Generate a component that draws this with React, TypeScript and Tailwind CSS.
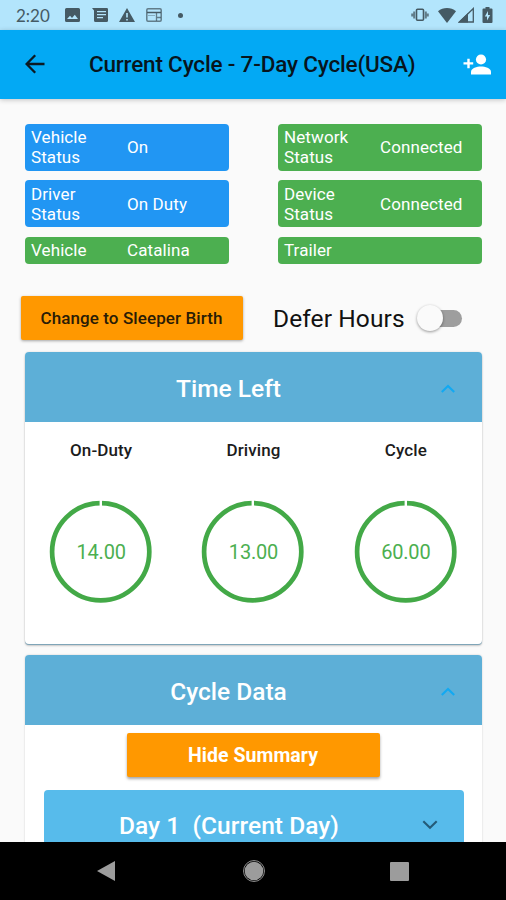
import type { ReactNode } from "react";

function Chip({ label, value, color, tall }: { label: ReactNode; value?: string; color: string; tall?: boolean }) {
  return (
    <div className={`flex items-center rounded-[4px] pl-1.5 text-[17px] leading-5 tracking-[0.1px] text-white ${color} ${tall ? "h-[47px]" : "h-[27px]"}`}>
      <div className="w-24">{label}</div>
      <div>{value}</div>
    </div>
  );
}

function Gauge({ title, value }: { title: string; value: string }) {
  return (
    <div className="flex flex-1 flex-col items-center">
      <div className="mt-[18px] text-[17px] font-medium leading-5 tracking-[0.1px] text-[#1c1c1c]">{title}</div>
      <div className="relative mt-[40px] flex h-[104px] w-[104px] items-center justify-center">
        <svg className="absolute inset-0" width="104" height="104" viewBox="0 0 104 104">
          <circle cx="51.7" cy="51.7" r="48.6" fill="none" stroke="#43a947" strokeWidth="4.7" />
          <rect x="50.600" y="0" width="2.400" height="7" fill="#fff" />
        </svg>
        <span className="relative text-[20px] tracking-[-0.2px] text-[#4caf50]">{value}</span>
      </div>
    </div>
  );
}

function Chevron({ down, color }: { down?: boolean; color: string }) {
  return (
    <svg width="16" height="10" viewBox="0 0 16 10" fill="none" stroke={color} strokeWidth="2.1">
      <path d={down ? "M1.3 1.3 8 7.8 14.7 1.3" : "M1.8 8 8 2 14.2 8"} />
    </svg>
  );
}

function StatusBar() {
  return (
    <div className="flex h-[30px] shrink-0 items-center bg-[#b3e5fc] pl-4 pr-3 text-[#455a64]">
      <span className="w-[49px] pt-px font-['Lato'] text-[17px] leading-[30px]">2:20</span>
      <svg width="15" height="14" viewBox="0 0 15 14" fill="currentColor">
        <path fillRule="evenodd" d="M1.5 0h12A1.5 1.5 0 0 1 15 1.5v11a1.5 1.5 0 0 1-1.5 1.5h-12A1.5 1.5 0 0 1 0 12.500v-11A1.500 1.500 0 0 1 1.500 0ZM2 11h11L9.800 6.700 7 10 5 7.800Z" />
      </svg>
      <svg className="ml-3" width="16" height="14" viewBox="0 0 16 14" fill="currentColor">
        <path fillRule="evenodd" d="M0 0h14.500A1.300 1.300 0 0 1 16 1.300v11A1.500 1.500 0 0 1 14.500 14H3.500A1.500 1.500 0 0 1 2 12.500V2.500ZM5 3v1.300h9V3ZM5 6v1.300h9V6ZM5 9v1.300h6V9Z" />
      </svg>
      <svg className="ml-[11px]" width="16" height="14" viewBox="0 0 16 14" fill="currentColor">
        <path fillRule="evenodd" d="M8 0 16 14H0ZM7.200 5v4.500h1.600V5ZM7.200 11v1.500h1.600V11Z" />
      </svg>
      <svg className="ml-[11px]" width="16" height="14" viewBox="0 0 16 14" fill="none" stroke="currentColor">
        <rect x="0.800" y="0.800" width="14.400" height="12.400" rx="1.200" strokeWidth="1.500" opacity="0.75" />
        <path d="M1 4.500h14" strokeWidth="1.500" />
        <path d="M10.500 5v8M10.500 9.500h4.500" strokeWidth="1.300" opacity="0.75" />
        <path d="M2 7.500h7" strokeWidth="1" opacity="0.4" />
      </svg>
      <span className="ml-4 h-[5px] w-[5px] rounded-full bg-[#455a64]" />
      <div className="flex-1" />
      <svg width="18" height="14" viewBox="0 0 18 14" fill="none" stroke="currentColor">
        <rect x="5.500" y="1.300" width="7" height="11" rx="1" strokeWidth="1.600" />
        <path d="M3.200 3.500v7M14.800 3.500v7M1.200 5.500v3M16.800 5.500v3" strokeWidth="2" opacity="0.75" />
      </svg>
      <svg className="ml-[9px]" width="18" height="15" viewBox="0 0 18 15" fill="currentColor">
        <path d="M0 3.200C5-1 13-1 18 3.200L9 15Z" />
      </svg>
      <svg className="ml-[2px]" width="16" height="16" viewBox="0 0 16 16">
        <path d="M15.300 1.500v13.500H1.500Z" fill="none" stroke="currentColor" strokeWidth="1.300" />
        <path d="M10 6v9.500H0Z" fill="currentColor" />
      </svg>
      <svg className="ml-2 mr-px" width="11" height="16" viewBox="0 0 11 16" fill="currentColor">
        <path fillRule="evenodd" d="M3.500 0h4v1.500H9.500a1 1 0 0 1 1 1V15a1 1 0 0 1-1 1h-8a1 1 0 0 1-1-1V2.500a1 1 0 0 1 1-1h2ZM6 4 2.800 9.500H5V13.500L8.200 8H6Z" />
      </svg>
    </div>
  );
}

function CardHeader({ title }: { title: string }) {
  return (
    <div className="flex h-[70px] items-center rounded-t-[4px] bg-[#5dafd7] pr-[26px] pt-1">
      <h2 className="flex-1 pr-2 text-center text-[24.5px] font-medium leading-[30px] text-white">{title}</h2>
      <Chevron color="#12a9f2" />
    </div>
  );
}

export default function App() {
  return (
    <div className="flex h-[900px] w-[506px] flex-col overflow-hidden bg-[#fafafa] font-['Roboto',sans-serif]">
      <StatusBar />
      <header className="z-10 flex h-[68.500px] shrink-0 items-center bg-[#03a9f4] pl-[25px] pr-[15px] shadow-[0_1px_5px_rgba(0,0,0,0.22)]">
        <svg width="20" height="20" viewBox="0 0 20 20" fill="none" stroke="#0b1a22" strokeWidth="2.300">
          <path d="M19.500 10H2M10.200 1.200 1.600 10l8.600 8.800" />
        </svg>
        <h1 className="ml-11 flex-1 whitespace-nowrap pt-[2px] text-[22.500px] font-medium tracking-[-0.18px] text-[#07151d]">Current Cycle - 7-Day Cycle(USA)</h1>
        <svg width="28" height="21" viewBox="0 0 28 21" fill="#fff">
          <circle cx="18" cy="5.500" r="5.100" />
          <path d="M8 20.500v-2.700c0-3.300 6-5.200 10-5.200s10 1.900 10 5.200v2.700Z" />
          <path d="M4.300 4.800h2.400v3.500h3.500v2.300H6.700v3.600H4.300v-3.600H.5V8.300h3.800Z" />
        </svg>
      </header>

      <main className="flex-1 overflow-hidden px-6 pt-[25px]">
        <section className="ml-px grid w-[457px] grid-cols-[204px_204px] justify-between gap-y-[9.500px]">
          <Chip tall color="bg-[#2196f3]" label={<>Vehicle<br />Status</>} value="On" />
          <Chip tall color="bg-[#4caf50]" label={<>Network<br />Status</>} value="Connected" />
          <Chip tall color="bg-[#2196f3]" label={<>Driver<br />Status</>} value="On Duty" />
          <Chip tall color="bg-[#4caf50]" label={<>Device<br />Status</>} value="Connected" />
          <Chip color="bg-[#4caf50]" label="Vehicle" value="Catalina" />
          <Chip color="bg-[#4caf50]" label="Trailer" />
        </section>

        <section className="-ml-[3px] mt-8 flex h-11 items-center">
          <button className="h-11 w-[222px] rounded-[2px] bg-[#ff9800] pr-px pt-[2px] text-[17px] font-medium tracking-[0.1px] text-[#2a1c06] shadow-[0_1px_3px_rgba(0,0,0,0.35)]">Change to Sleeper Birth</button>
          <span className="ml-[30px] w-[145px] whitespace-nowrap pt-[3px] text-[24.500px] tracking-[0.100px] text-[#111]">Defer Hours</span>
          <span className="relative mt-[2px] h-[17px] w-[44px] rounded-full bg-[#9e9e9e]">
            <span className="absolute -left-px -top-[5px] h-[26px] w-[26px] rounded-full bg-[#fafafa] shadow-[0_1px_3px_rgba(0,0,0,0.400)]" />
          </span>
        </section>

        <section className="ml-px mt-3 h-[292px] w-[457px] rounded-[4px] bg-white shadow-[0_1px_0_#7fa5b8,0_2px_2px_rgba(0,0,0,0.2),0_0_2px_rgba(0,0,0,0.15)]">
          <CardHeader title="Time Left" />
          <div className="flex">
            <Gauge title="On-Duty" value="14.00" />
            <Gauge title="Driving" value="13.00" />
            <Gauge title="Cycle" value="60.00" />
          </div>
        </section>

        <section className="ml-px mt-[11px] h-[300px] w-[457px] rounded-[4px] bg-white shadow-[0_0_2px_rgba(0,0,0,0.2)]">
          <CardHeader title="Cycle Data" />
          <button className="mx-auto mt-2 block h-11 w-[253px] rounded-[2px] bg-[#ff9800] pr-px pt-[2px] text-[19.500px] font-bold tracking-[0.05px] text-white shadow-[0_2px_3px_rgba(0,0,0,0.350)]">Hide Summary</button>
          <div className="mx-[18.500px] mt-[13px] flex h-[71px] items-center rounded-t-[4px] bg-[#57bbeb] pr-[26px]">
            <h3 className="flex-1 whitespace-pre pr-[7px] pt-[2px] text-center text-[24.500px] font-medium tracking-[0.05px] text-white">{"Day 1  (Current Day)"}</h3>
            <Chevron down color="#245b78" />
          </div>
        </section>
      </main>

      <nav className="z-10 flex h-[58px] shrink-0 items-center bg-black pl-[97px]">
        <svg width="18" height="20" viewBox="0 0 18 20" fill="#9c9c9c"><path d="M18 0v20L0 10Z" /></svg>
        <svg className="ml-[127px]" width="24" height="24" viewBox="0 0 24 24">
          <circle cx="12" cy="12" r="10.500" fill="none" stroke="#8c8c8c" strokeWidth="1" />
          <circle cx="12" cy="12" r="9.300" fill="#9c9c9c" />
        </svg>
        <span className="ml-[124px] h-[19px] w-[19px] rounded-[1px] bg-[#9c9c9c]" />
      </nav>
    </div>
  );
}
